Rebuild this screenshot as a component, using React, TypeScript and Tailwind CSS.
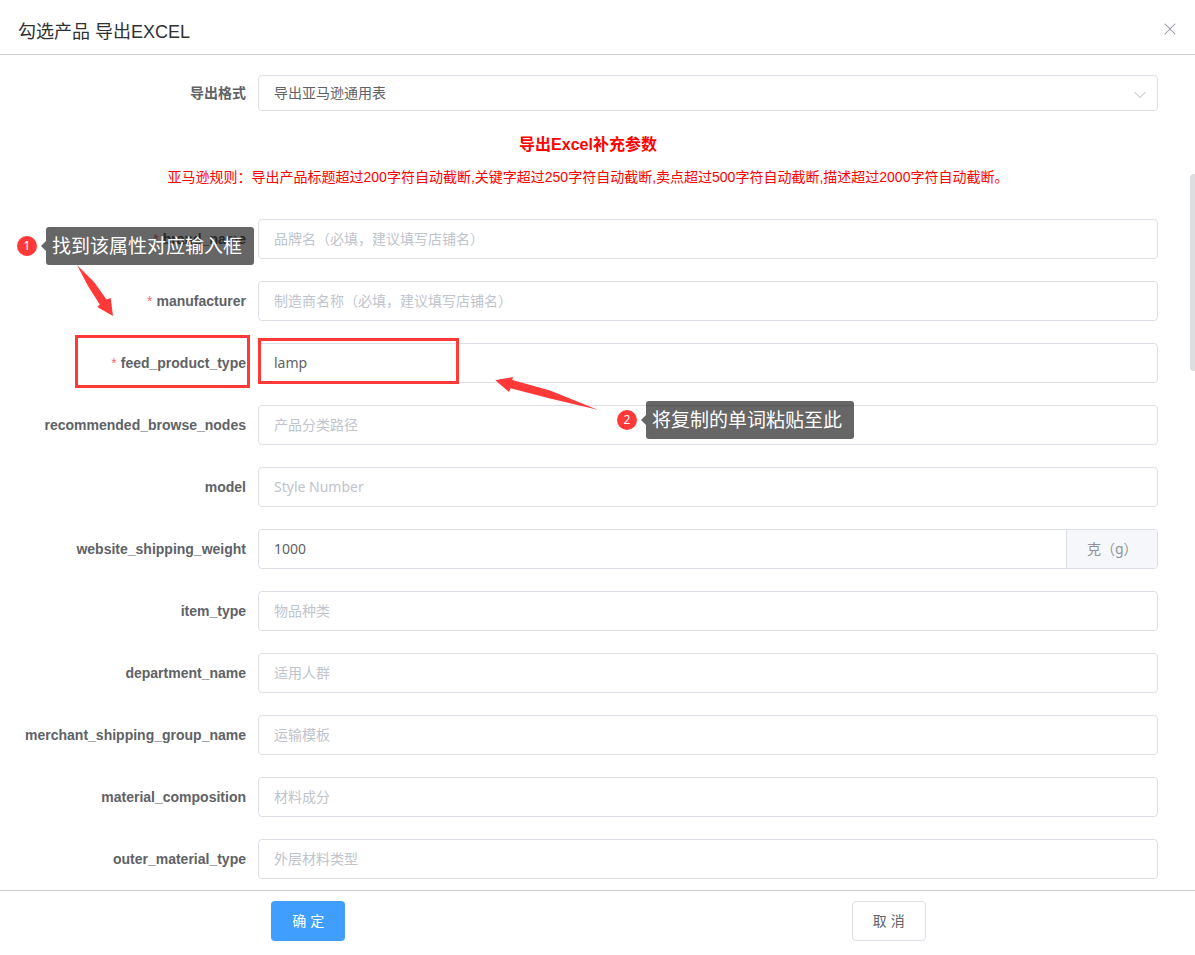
import { ChevronDown, X } from 'lucide-react'

interface Field {
  name: string
  placeholder?: string
  value?: string
  required?: boolean
  unit?: string
}

const FIELDS: Field[] = [
  { name: 'brand_name', placeholder: '品牌名（必填，建议填写店铺名）', required: true },
  { name: 'manufacturer', placeholder: '制造商名称（必填，建议填写店铺名）', required: true },
  { name: 'feed_product_type', value: 'lamp', required: true },
  { name: 'recommended_browse_nodes', placeholder: '产品分类路径' },
  { name: 'model', placeholder: 'Style Number' },
  { name: 'website_shipping_weight', value: '1000', unit: '克（g）' },
  { name: 'item_type', placeholder: '物品种类' },
  { name: 'department_name', placeholder: '适用人群' },
  { name: 'merchant_shipping_group_name', placeholder: '运输模板' },
  { name: 'material_composition', placeholder: '材料成分' },
  { name: 'outer_material_type', placeholder: '外层材料类型' },
]

function FieldRow({ field }: { field: Field }) {
  return (
    <div className="flex items-center gap-3">
      <label
        htmlFor={field.name}
        className="w-[228px] shrink-0 whitespace-nowrap text-right text-sm font-bold text-[#606266]"
      >
        {field.required && <span className="mr-1 font-normal text-[#f56c6c]">*</span>}
        {field.name}
      </label>
      <div className="flex h-10 min-w-0 flex-1 overflow-hidden rounded border border-[#dcdfe6] bg-white font-['Noto_Sans','Noto_Sans_CJK_SC',sans-serif] text-sm">
        <input
          id={field.name}
          type="text"
          defaultValue={field.value}
          placeholder={field.placeholder}
          className="min-w-0 flex-1 px-[15px] text-[#606266] outline-none placeholder:text-[#c0c4cc]"
        />
        {field.unit && (
          <span className="flex w-[91px] items-center border-l border-[#dcdfe6] bg-[#f5f7fa] pl-5 text-[#909399]">
            {field.unit}
          </span>
        )}
      </div>
    </div>
  )
}

// numbered marker with a speech bubble
function Callout({ step, text }: { step: number; text: string }) {
  return (
    <div className="flex items-center">
      <span className="flex h-5 w-5 items-center justify-center rounded-full bg-[#ff3838] font-['Noto_Sans',sans-serif] text-xs text-white">
        {step}
      </span>
      <svg width="5" height="10" viewBox="0 0 5 10" className="ml-1" aria-hidden="true">
        <path d="M5 0 0 5l5 5z" fill="#000" fillOpacity="0.6" />
      </svg>
      <span className="flex h-[38px] w-[208px] items-center whitespace-nowrap rounded-[3px] bg-black/60 pl-1.5 pt-0.5 text-[19px] text-white">
        {text}
      </span>
    </div>
  )
}

export default function App() {
  return (
    <div className="relative min-h-screen bg-white font-['Liberation_Sans','Noto_Sans_CJK_SC',sans-serif]">
      <header className="flex h-[55px] items-center justify-between border-b border-[#ccc] pl-[18px] pr-[15px] pt-2.5">
        <h1 className="text-lg text-[#303133]">勾选产品 导出EXCEL</h1>
        <button type="button" aria-label="关闭" className="mb-1.5 text-[#909399]">
          <X className="h-5 w-5" strokeWidth={1.25} />
        </button>
      </header>

      <form className="relative border-b border-[#ccc] pb-[11px] pl-[18px] pr-[37px] pt-5">
        <div className="flex items-center gap-3">
          <label htmlFor="format" className="w-[228px] shrink-0 text-right text-sm font-bold text-[#606266]">
            导出格式
          </label>
          <div className="relative min-w-0 flex-1">
            <select
              id="format"
              className="block h-9 w-full appearance-none rounded border border-[#dcdfe6] bg-white px-[15px] text-sm text-[#606266] outline-none"
            >
              <option>导出亚马逊通用表</option>
            </select>
            <ChevronDown
              className="pointer-events-none absolute right-2 top-2.5 h-5 w-5 text-[#c0c4cc]"
              strokeWidth={1.25}
            />
          </div>
        </div>

        <h2 className="mt-[22px] text-center text-base font-bold text-[#f00]">导出Excel补充参数</h2>
        <p className="mt-2.5 text-center text-sm text-[#f00]">
          亚马逊规则：导出产品标题超过200字符自动截断,关键字超过250字符自动截断,卖点超过500字符自动截断,描述超过2000字符自动截断。
        </p>

        <div className="mt-8 flex flex-col gap-[22px]">
          {FIELDS.map((field) => (
            <FieldRow key={field.name} field={field} />
          ))}
        </div>

        {/* Scroll thumb */}
        <div className="absolute right-0 top-[119px] h-[197px] w-[5px] rounded-l bg-[#dddee0]" />
      </form>

      <footer className="grid grid-cols-2 justify-items-center pl-[18px] pr-4 py-2.5 text-sm">
        <button type="button" className="h-10 w-[74px] rounded bg-[#409eff] text-white">
          确 定
        </button>
        <button type="button" className="h-10 w-[74px] rounded border border-[#dcdfe6] bg-white text-[#606266]">
          取 消
        </button>
      </footer>

      {/* Walkthrough annotations */}
      <div className="pointer-events-none absolute inset-0 overflow-hidden">
        <div className="absolute left-[75px] top-[335px] h-[53px] w-[175px] border-3 border-[#ff3838]" />
        <div className="absolute left-[258px] top-[338px] h-[46px] w-[201px] border-3 border-[#ff3838]" />
        <svg className="absolute left-[76px] top-[264px]" width="40" height="54" viewBox="76 264 40 54" aria-hidden="true">
          <path d="M77 265 94 282 106.5 299.5 110.7 298 113 316 97.3 307 99.8 304.5 88 286z" fill="#ff3838" />
        </svg>
        <svg className="absolute left-[494px] top-[375px]" width="106" height="36" viewBox="494 375 106 36" aria-hidden="true">
          <path d="M495.3 380.3 513 377l-.7 3L550 390.5l47.7 19.2L550 398.5 510.5 388.3 509 392z" fill="#ff3838" />
        </svg>
        <div className="absolute left-[17px] top-[227px]">
          <Callout step={1} text="找到该属性对应输入框" />
        </div>
        <div className="absolute left-[617px] top-[401px]">
          <Callout step={2} text="将复制的单词粘贴至此" />
        </div>
      </div>
    </div>
  )
}
